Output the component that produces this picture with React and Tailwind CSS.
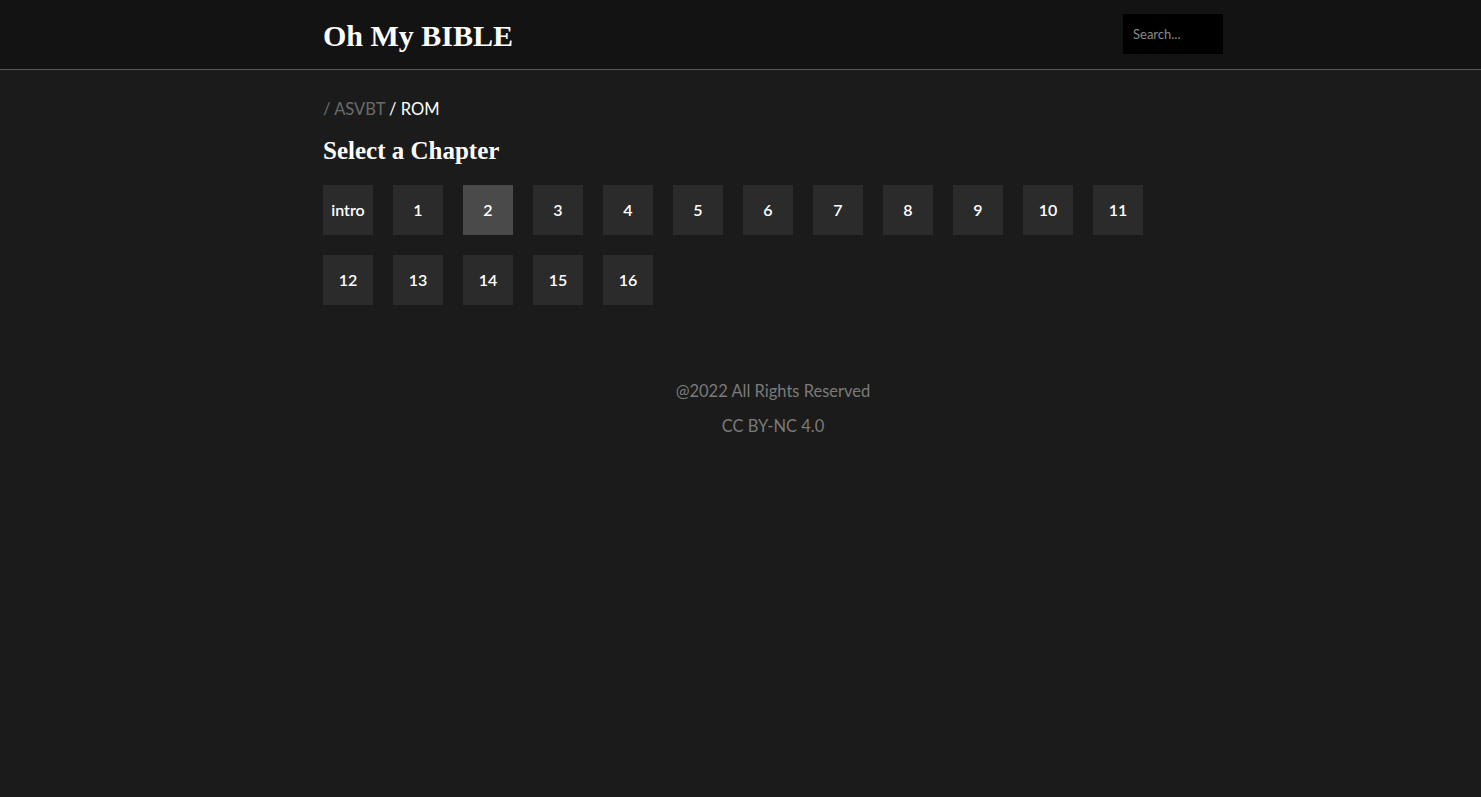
import React from 'react';

const chapters = ['intro', '1', '2', '3', '4', '5', '6', '7', '8', '9', '10', '11', '12', '13', '14', '15', '16'];

const App = () => {
  const active = '2';

  return (
    <div className="min-h-[797px] bg-[#1b1b1b] text-white font-['Lato','Open_Sans',sans-serif]">
      {/* Header */}
      <header className="bg-[#131313] border-b border-[#5a5a5a] h-[70px] pl-[65px]">
        <div className="w-[900px] mx-auto h-full flex items-center justify-between">
          <div className="font-['Liberation_Serif',serif] font-bold text-[30px] pt-[2px]">
            Oh My BIBLE
          </div>
          <input
            type="text"
            placeholder="Search..."
            className="w-[100px] h-[40px] bg-black px-[10px] text-[13px] text-white placeholder:text-[#8a8a8a] outline-none mb-[1px]"
          />
        </div>
      </header>

      <main className="pl-[65px]">
        <div className="w-[900px] mx-auto pt-[29px]">
          {/* Breadcrumb */}
          <div className="text-[16.5px] leading-[20px]">
            <span className="text-[#6b6b6b]">/ ASVBT</span>
            <span className="text-white"> / ROM</span>
          </div>

          {/* Title */}
          <h1 className="mt-[17px] font-['Liberation_Serif',serif] font-bold text-[25px] leading-[30px]">
            Select a Chapter
          </h1>

          {/* Chapters */}
          <div className="mt-[19px] flex flex-wrap gap-[20px] w-[840px]">
            {chapters.map((c) => (
              <div
                key={c}
                className={
                  'w-[50px] h-[50px] flex items-center justify-center text-[16px] font-semibold ' +
                  (c === active ? 'bg-[#4a4a4a]' : 'bg-[#2b2b2b]')
                }
              >
                {c}
              </div>
            ))}
          </div>

          {/* Footer */}
          <footer className="mt-[75px] text-center text-[#7a7a7a] text-[16.5px]">
            <p className="leading-[22px]">@2022 All Rights Reserved</p>
            <p className="mt-[13px] leading-[22px]">CC BY-NC 4.0</p>
          </footer>
        </div>
      </main>
    </div>
  );
};

export default App;
